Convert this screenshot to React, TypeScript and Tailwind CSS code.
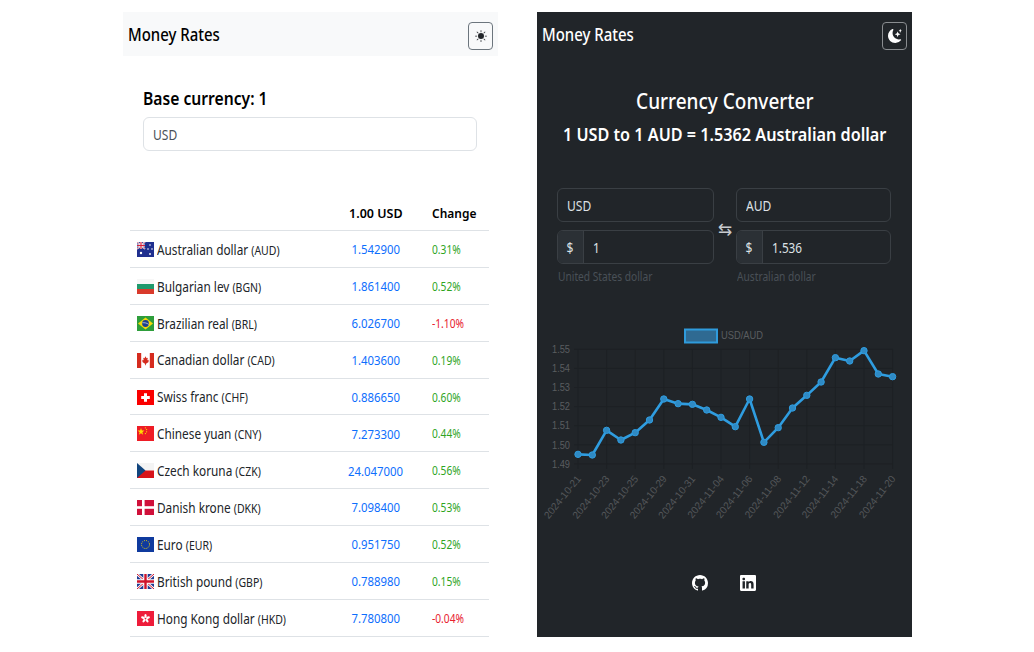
import React from "react";
import { BsSunFill, BsMoonStarsFill, BsGithub, BsLinkedin } from "react-icons/bs";

const UnionMini = () => (
  <g>
    <rect width="8" height="7" fill="#1f3a93" />
    <path d="M0 0L8 7M8 0L0 7" stroke="#fff" strokeWidth="1.6" />
    <path d="M0 0L8 7M8 0L0 7" stroke="#d8203a" strokeWidth="0.5" />
    <path d="M4 0V7M0 3.5H8" stroke="#fff" strokeWidth="2.2" />
    <path d="M4 0V7M0 3.5H8" stroke="#d8203a" strokeWidth="1.2" />
  </g>
);

const Flags: Record<string, React.ReactNode> = {
  AUD: (
    <>
      <rect width="17" height="15" fill="#1f2f8f" />
      <UnionMini />
      <g fill="#fff">
        <circle cx="4" cy="11" r="1.2" />
        <circle cx="13" cy="3" r="0.8" />
        <circle cx="11" cy="7" r="0.8" />
        <circle cx="15" cy="7" r="0.8" />
        <circle cx="13" cy="12" r="0.9" />
      </g>
    </>
  ),
  BGN: (
    <>
      <rect width="17" height="5" fill="#f7f7f7" />
      <rect y="5" width="17" height="5" fill="#1f9a6d" />
      <rect y="10" width="17" height="5" fill="#d93a2b" />
    </>
  ),
  BRL: (
    <>
      <rect width="17" height="15" fill="#2e9e3b" />
      <path d="M8.5 1.5L16 7.5L8.5 13.5L1 7.5Z" fill="#f5d90a" />
      <circle cx="8.5" cy="7.5" r="3.4" fill="#1f3f8f" />
      <path d="M5.3 6.8C7.5 6.5 10 7 11.8 8.4" stroke="#fff" strokeWidth="0.6" fill="none" />
    </>
  ),
  CAD: (
    <>
      <rect width="17" height="15" fill="#fff" />
      <rect width="4.2" height="15" fill="#d52b1e" />
      <rect x="12.8" width="4.2" height="15" fill="#d52b1e" />
      <path d="M8.5 3.2L9.5 5.2L10.8 4.8L10.3 7.2L11.8 6.8L11.3 8.4L12 8.8L9 10.8L8.8 12.2H8.2L8 10.8L5 8.8L5.7 8.4L5.2 6.8L6.7 7.2L6.2 4.8L7.5 5.2Z" fill="#d52b1e" />
    </>
  ),
  CHF: (
    <>
      <rect width="17" height="15" fill="#fa0000" />
      <path d="M7 3.2H10V6H12.8V9H10V11.8H7V9H4.2V6H7Z" fill="#fff" />
    </>
  ),
  CNY: (
    <>
      <rect width="17" height="15" fill="#ee1c25" />
      <path d="M4 2L4.9 4.6L7.4 4.6L5.4 6.2L6.1 8.8L4 7.2L1.9 8.8L2.6 6.2L.6 4.6L3.1 4.6Z" fill="#ffdf00" />
      <g fill="#ffdf00">
        <circle cx="8.4" cy="1.8" r="0.6" />
        <circle cx="9.6" cy="3.6" r="0.6" />
        <circle cx="9.6" cy="5.8" r="0.6" />
        <circle cx="8.4" cy="7.6" r="0.6" />
      </g>
    </>
  ),
  CZK: (
    <>
      <rect width="17" height="7.5" fill="#f4f4f4" />
      <rect y="7.5" width="17" height="7.5" fill="#d7141a" />
      <path d="M0 0L8.5 7.5L0 15Z" fill="#11457e" />
    </>
  ),
  DKK: (
    <>
      <rect width="17" height="15" fill="#d0103a" />
      <rect x="5" width="2.6" height="15" fill="#fff" />
      <rect y="6.2" width="17" height="2.6" fill="#fff" />
    </>
  ),
  EUR: (
    <>
      <rect width="17" height="15" fill="#0f3a9e" />
      <circle cx="8.5" cy="7.5" r="4" fill="none" stroke="#f5d90a" strokeWidth="1" strokeDasharray="1 1.1" />
    </>
  ),
  GBP: (
    <>
      <rect width="17" height="15" fill="#1f3a93" />
      <path d="M0 0L17 15M17 0L0 15" stroke="#fff" strokeWidth="2.6" />
      <path d="M0 0L17 15M17 0L0 15" stroke="#cf142b" strokeWidth="1" />
      <path d="M8.5 0V15M0 7.5H17" stroke="#fff" strokeWidth="4.4" />
      <path d="M8.5 0V15M0 7.5H17" stroke="#cf142b" strokeWidth="2.4" />
    </>
  ),
  HKD: (
    <>
      <rect width="17" height="15" fill="#ee1c3a" />
      <g fill="#fff" transform="translate(8.5 7.5)">
        <ellipse cx="0" cy="-2.6" rx="1.2" ry="2" />
        <ellipse cx="0" cy="-2.6" rx="1.2" ry="2" transform="rotate(72)" />
        <ellipse cx="0" cy="-2.6" rx="1.2" ry="2" transform="rotate(144)" />
        <ellipse cx="0" cy="-2.6" rx="1.2" ry="2" transform="rotate(216)" />
        <ellipse cx="0" cy="-2.6" rx="1.2" ry="2" transform="rotate(288)" />
      </g>
    </>
  ),
};

const rows = [
  ["AUD", "Australian dollar", "1.542900", "0.31%"],
  ["BGN", "Bulgarian lev", "1.861400", "0.52%"],
  ["BRL", "Brazilian real", "6.026700", "-1.10%"],
  ["CAD", "Canadian dollar", "1.403600", "0.19%"],
  ["CHF", "Swiss franc", "0.886650", "0.60%"],
  ["CNY", "Chinese yuan", "7.273300", "0.44%"],
  ["CZK", "Czech koruna", "24.047000", "0.56%"],
  ["DKK", "Danish krone", "7.098400", "0.53%"],
  ["EUR", "Euro", "0.951750", "0.52%"],
  ["GBP", "British pound", "0.788980", "0.15%"],
  ["HKD", "Hong Kong dollar", "7.780800", "-0.04%"],
];

const ys = [403, 405, 331, 360, 338, 300, 237, 251, 253, 270, 292, 320, 237, 367, 323, 264, 226, 186, 113, 123, 92, 162, 170];
const labels = ["2024-10-21", "2024-10-23", "2024-10-25", "2024-10-29", "2024-10-31", "2024-11-04", "2024-11-06", "2024-11-08", "2024-11-12", "2024-11-14", "2024-11-18", "2024-11-20"];
const px = (i: number) => 578 + i * 14.3;
const py = (v: number) => 320 + v / 3;

function Chart() {
  const pts = ys.map((v, i) => `${px(i)},${py(v)}`).join(" ");
  const ticks = ["1.55", "1.54", "1.53", "1.52", "1.51", "1.50", "1.49"];
  return (
    <svg viewBox="537 325 375 215" className="block w-[375px] h-[215px]" style={{ fontFamily: "'Liberation Sans', sans-serif" }}>
      <rect x="685" y="329.5" width="32" height="13" fill="#2f6a92" stroke="#2f9bdc" strokeWidth="2" />
      <text x="721" y="339" fontSize="10.5" fill="#5a5d60" textLength="42" lengthAdjust="spacingAndGlyphs">USD/AUD</text>
      {ticks.map((t, i) => {
        const y = 349.3 + i * 19.1;
        return (
          <g key={t}>
            <line x1="574" x2={893} y1={y} y2={y} stroke="#1d2024" strokeWidth="1" />
            <text x="552" y={y + 3.7} fontSize="10.5" fill="#5a5d60" textLength="18" lengthAdjust="spacingAndGlyphs">{t}</text>
          </g>
        );
      })}
      {labels.map((l, i) => {
        const x = px(i * 2);
        return (
          <g key={l}>
            <line x1={x} x2={x} y1="349" y2="469" stroke="#1d2024" strokeWidth="1" />
            <text transform={`translate(${x + 3.5} 479) rotate(-51)`} textAnchor="end" fontSize="10.2" fill="#54575a">{l}</text>
          </g>
        );
      })}
      <polyline points={pts} fill="none" stroke="#2f9de0" strokeWidth="2.6" strokeLinejoin="round" />
      {ys.map((v, i) => (
        <circle key={i} cx={px(i)} cy={py(v)} r="3.2" fill="#2f8ac4" stroke="#2f9de0" strokeWidth="1" />
      ))}
    </svg>
  );
}

function Nav({ dark }: { dark: boolean }) {
  return (
    <div className={`h-[44px] flex items-center justify-between pl-[5px] pr-[5px] ${dark ? "bg-[#212529] text-white" : "bg-[#f8f9fa] text-black"}`}>
      <span className="inline-block origin-left scale-x-[0.83] text-[18px] font-medium">Money Rates</span>
      <div className={`w-[25px] h-[28px] mt-[4px] rounded-[4px] border flex items-center justify-center ${dark ? "border-[#8a8d90]" : "border-[#6c757d]"}`}>
        {dark ? <BsMoonStarsFill className="text-[14px] text-white" /> : <BsSunFill className="text-[12px] text-[#212529]" />}
      </div>
    </div>
  );
}

function Converter({ code, amount, caption, width }: { code: string; amount: string; caption: string; width: string }) {
  return (
    <div className={`${width} flex flex-col`}>
      <div className="h-[34px] rounded-[6px] border border-[#3a3f44] flex items-center px-[9px] text-[14px] text-[#dee2e6]">
        <span className="inline-block origin-left scale-x-[0.86]">{code}</span>
      </div>
      <div className="h-[34px] mt-[8px] rounded-[6px] border border-[#3a3f44] flex items-stretch text-[14px] text-[#dee2e6] overflow-hidden">
        <div className="w-[26px] bg-[#2b3035] border-r border-[#3a3f44] flex items-center justify-center">
          <span className="inline-block scale-x-[0.86]">$</span>
        </div>
        <div className="flex items-center pl-[9px]">
          <span className="inline-block origin-left scale-x-[0.84]">{amount}</span>
        </div>
      </div>
      <div className="mt-[4px] pl-[1px] text-[12px] text-[#495057] leading-[18px] whitespace-nowrap">
        <span className="inline-block origin-left scale-x-[0.85]">{caption}</span>
      </div>
    </div>
  );
}

export default function App() {
  return (
    <div className="w-[1034px] h-[652px] overflow-hidden bg-white flex pt-[12px] pl-[123px] gap-[39px] font-['Noto_Sans',sans-serif]">
      <div className="w-[375px] flex flex-col">
        <Nav dark={false} />
        <div className="pl-[20px] pr-[21px] mt-[30px]">
          <div className="text-[18px] leading-[24px] font-semibold text-black whitespace-nowrap">
            <span className="inline-block origin-left scale-x-[0.87]">Base currency: 1</span>
          </div>
          <div className="mt-[7px] h-[34px] rounded-[6px] border border-[#dee2e6] flex items-center px-[9px] text-[14px] text-[#495057]">
            <span className="inline-block origin-left scale-x-[0.86]">USD</span>
          </div>
        </div>
        <div className="ml-[7px] w-[359px] mt-[45px]">
          <div className="h-[35px] flex items-center pt-[1px] text-[13px] font-semibold text-black border-b border-[#dee2e6]">
            <div className="w-[193px]" />
            <div className="w-[105px] text-center">
              <span className="inline-block scale-x-[0.96]">1.00 USD</span>
            </div>
            <div className="pl-[4px]">
              <span className="inline-block origin-left scale-x-[0.92]">Change</span>
            </div>
          </div>
          {rows.map(([code, name, rate, change]) => (
            <div key={code} className="h-[36.9px] flex items-center border-b border-[#dee2e6] text-[#212529] pt-[2px]">
              <svg viewBox="0 0 17 15" className="w-[17px] h-[15px] ml-[7px] mr-[3px] -mt-[1px] shrink-0">{Flags[code]}</svg>
              <div className="w-[166px] whitespace-nowrap text-[13.5px]">
                <span className="inline-block origin-left scale-x-[0.875]">
                  {name} <span className="text-[12px]">({code})</span>
                </span>
              </div>
              <div className="w-[105px] text-center text-[13px] text-[#0d6efd]">
                <span className="inline-block scale-x-[0.875]">{rate}</span>
              </div>
              <div className={`text-[12px] pl-[4px] ${change.startsWith("-") ? "text-[#e8212e]" : "text-[#2fa51f]"}`}>
                <span className="inline-block origin-left scale-x-[0.85]">{change}</span>
              </div>
            </div>
          ))}
        </div>
      </div>
      <div className="w-[375px] h-[625px] bg-[#212529] flex flex-col">
        <Nav dark={true} />
        <div className="mt-[30px] text-center text-white text-[22px] leading-[28px] font-medium whitespace-nowrap">
          <span className="inline-block scale-x-[0.863]">Currency Converter</span>
        </div>
        <div className="mt-[6px] text-center text-white text-[18px] leading-[28px] font-semibold whitespace-nowrap">
          <span className="inline-block scale-x-[0.9]">1 USD to 1 AUD = 1.5362 Australian dollar</span>
        </div>
        <div className="mt-[40px] flex pl-[20px] gap-[22px] relative">
          <Converter width="w-[157px]" code="USD" amount="1" caption="United States dollar" />
          <Converter width="w-[155px]" code="AUD" amount="1.536" caption="Australian dollar" />
          <span className="absolute left-[181px] top-[29px] text-[17px] text-[#c8cbcf] font-['DejaVu_Sans',sans-serif]">⇆</span>
        </div>
        <div className="mt-[39px]">
          <Chart />
        </div>
        <div className="mt-[35px] flex pl-[155px] gap-[32px] text-white text-[16px]">
          <BsGithub />
          <BsLinkedin />
        </div>
      </div>
    </div>
  );
}
